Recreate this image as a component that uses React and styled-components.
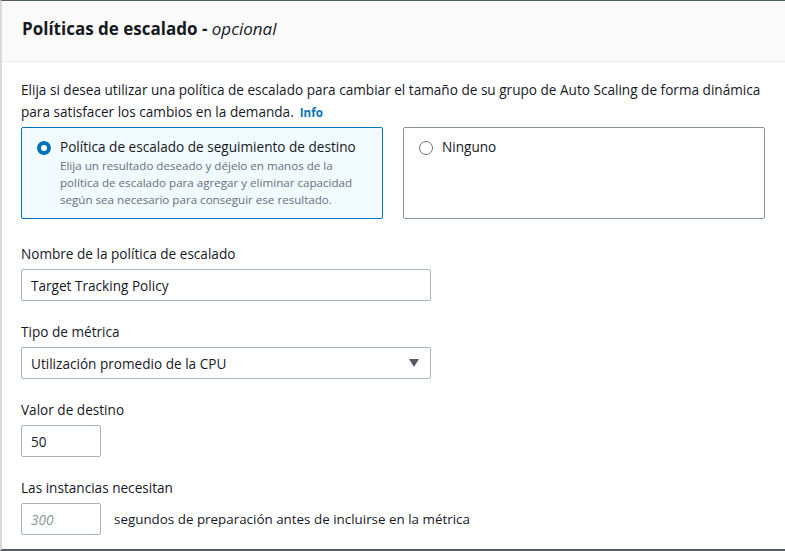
import React from "react";
import styled, { createGlobalStyle } from "styled-components";

const GlobalStyle = createGlobalStyle`
  html, body {
    margin: 0;
    padding: 0;
    background: #ffffff;
  }
  body {
    font-family: "Open Sans", "Noto Sans", Arial, sans-serif;
    color: #16191f;
    -webkit-font-smoothing: antialiased;
  }
`;

const Card = styled.section`
  width: 800px;
  height: 551px;
  box-sizing: border-box;
  border-top: 1px solid #545b64;
  border-left: 2px solid #d5dbdb;
  border-bottom: 2px solid #545b64;
  background: #fff;
  overflow: hidden;
`;

const Header = styled.header`
  background: #fafafa;
  border-bottom: 1px solid #eaeded;
  height: 61px;
  box-sizing: border-box;
  padding: 16px 20px 0;
`;

const Title = styled.h2`
  margin: 0;
  font-size: 17px;
  line-height: 24px;
  font-weight: 700;
  color: #16191f;

  em {
    font-weight: 400;
    font-style: italic;
  }
`;

const Body = styled.div`
  padding: 17px 20px 0 19px;
`;

const Intro = styled.p`
  margin: 0;
  font-size: 13.6px;
  line-height: 22px;
  color: #16191f;
`;

const InfoLink = styled.a`
  display: inline-block;
  line-height: 16px;
  color: #0073bb;
  font-weight: 700;
  font-size: 11.6px;
  margin-left: 6px;
  text-decoration: none;
`;

const Tiles = styled.div`
  display: grid;
  grid-template-columns: 362px 362px;
  column-gap: 20px;
  margin-top: 4px;
`;

const Tile = styled.div`
  box-sizing: border-box;
  height: 92px;
  border: 1px solid ${(p) => (p.$selected ? "#0073bb" : "#879596")};
  background: ${(p) => (p.$selected ? "#f1faff" : "#fff")};
  border-radius: 2px;
  padding: 9px 14px 0 15px;
  display: flex;
  gap: 9px;
  align-items: flex-start;
`;

const Radio = styled.span`
  flex: none;
  box-sizing: border-box;
  width: 14px;
  height: 14px;
  margin-top: 4px;
  border-radius: 50%;
  border: ${(p) => (p.$checked ? "4px solid #0073bb" : "1px solid #687078")};
  background: #fff;
`;

const TileText = styled.div`
  display: flex;
  flex-direction: column;
`;

const TileLabel = styled.span`
  font-size: 13.6px;
  line-height: 20px;
  color: #16191f;
`;

const TileDesc = styled.span`
  font-size: 11.6px;
  line-height: 17px;
  color: #687078;
`;

const Field = styled.div`
  margin-top: ${(p) => p.$top || 21}px;
`;

const Label = styled.label`
  display: block;
  font-size: 13.6px;
  line-height: 20px;
  color: #16191f;
  margin-bottom: 5px;
`;

const Input = styled.div`
  box-sizing: border-box;
  width: ${(p) => p.$width}px;
  height: 32px;
  border: 1px solid #aab7b8;
  border-radius: 2px;
  padding: 0 9px;
  display: flex;
  align-items: center;
  justify-content: space-between;
  font-size: 13.6px;
  color: ${(p) => (p.$placeholder ? "#879596" : "#16191f")};
  font-style: ${(p) => (p.$placeholder ? "italic" : "normal")};
  background: #fff;
`;

const Caret = styled.span`
  width: 0;
  height: 0;
  border-left: 5.5px solid transparent;
  border-right: 5.5px solid transparent;
  border-top: 8px solid #545b64;
  margin-right: 2px;
`;

const InlineRow = styled.div`
  display: flex;
  align-items: center;
  gap: 13px;
`;

const Suffix = styled.span`
  font-size: 13.4px;
  color: #16191f;
`;

export default function App() {
  return (
    <>
      <GlobalStyle />
      <Card>
        <Header>
          <Title>
            Políticas de escalado - <em>opcional</em>
          </Title>
        </Header>
        <Body>
          <Intro>
            Elija si desea utilizar una política de escalado para cambiar el
            tamaño de su grupo de Auto Scaling de forma dinámica para satisfacer
            los cambios en la demanda.
            <InfoLink href="#">Info</InfoLink>
          </Intro>
          <Tiles>
            <Tile $selected>
              <Radio $checked />
              <TileText>
                <TileLabel>Política de escalado de seguimiento de destino</TileLabel>
                <TileDesc>
                  Elija un resultado deseado y déjelo en manos de la política de
                  escalado para agregar y eliminar capacidad según sea necesario
                  para conseguir ese resultado.
                </TileDesc>
              </TileText>
            </Tile>
            <Tile>
              <Radio />
              <TileText>
                <TileLabel>Ninguno</TileLabel>
              </TileText>
            </Tile>
          </Tiles>

          <Field $top={25}>
            <Label>Nombre de la política de escalado</Label>
            <Input $width={410}>Target Tracking Policy</Input>
          </Field>

          <Field>
            <Label>Tipo de métrica</Label>
            <Input $width={410}>
              Utilización promedio de la CPU
              <Caret />
            </Input>
          </Field>

          <Field>
            <Label>Valor de destino</Label>
            <Input $width={80}>50</Input>
          </Field>

          <Field>
            <Label>Las instancias necesitan</Label>
            <InlineRow>
              <Input $width={80} $placeholder>
                300
              </Input>
              <Suffix>segundos de preparación antes de incluirse en la métrica</Suffix>
            </InlineRow>
          </Field>
        </Body>
      </Card>
    </>
  );
}
